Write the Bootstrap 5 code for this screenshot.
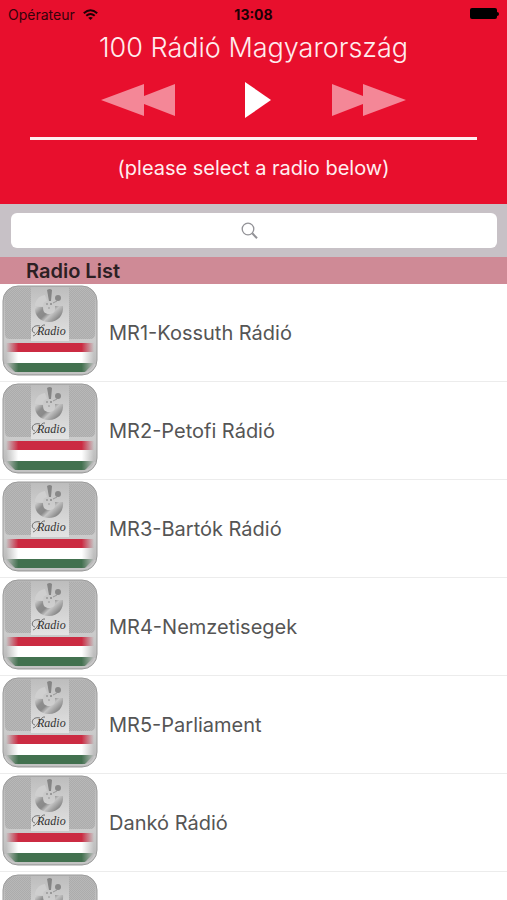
<!DOCTYPE html>
<html lang="hu">
<head>
<meta charset="utf-8">
<meta name="viewport" content="width=device-width, initial-scale=1">
<title>100 Rádió Magyarország</title>
<link href="https://cdn.jsdelivr.net/npm/bootstrap@5.3.0/dist/css/bootstrap.min.css" rel="stylesheet">
<style>
body { font-family: Inter, "Liberation Sans", sans-serif; }
svg { display: block; }
.player { background: #e80f2d; height: 204px; }
.status { height: 28px; font-size: 14px; color: #35020a; }
.status .clock { color: #1c0105; }
.app-title { font-size: 27px; line-height: 40px; font-weight: 300; color: #ffecee; }
.controls { height: 64px; }
.controls .btn:disabled { opacity: 1; border: 0; }
.progress-track { height: 3px; margin: 5px 30px 0; background: #ffeef0; }
.hint { font-size: 20px; line-height: 28px; margin-top: 14px; color: #ffeef0; }
.search { background: #c7c1c6; height: 53px; padding: 9px 10px 0 11px; }
.search .form-control { height: 35px; border: 0; border-radius: 6px; }
.section-head { background: #cf8a96; height: 27px; padding-left: 26px; font-size: 20px; line-height: 28px; font-weight: 600; color: #2c2023; }
.stations { scrollbar-width: none; }
.stations::-webkit-scrollbar { display: none; }
.station { height: 98px; padding: 0 0 0 2px; gap: 11px; font-size: 20px; color: #555; border-color: #ececec; }
</style>
<script src="https://cdn.jsdelivr.net/npm/bootstrap@5.3.0/dist/js/bootstrap.bundle.min.js" defer></script>
</head>
<body class="bg-white">
<svg width="0" height="0" class="position-absolute" aria-hidden="true">
  <defs>
    <linearGradient id="metal" x1="0" y1="0" x2="0" y2="1"><stop offset="0" stop-color="#b5b5b5"/><stop offset=".6" stop-color="#cbcbcb"/><stop offset="1" stop-color="#b4b4b4"/></linearGradient>
    <linearGradient id="shine" x1="0" y1="0" x2="0" y2="1"><stop offset="0" stop-color="#bdbdbd"/><stop offset="1" stop-color="#e3e3e3"/></linearGradient>
    <linearGradient id="ring" x1="0" y1="0" x2="1" y2=".6"><stop offset="0" stop-color="#dcdcdc"/><stop offset=".3" stop-color="#8e8e8e"/><stop offset=".5" stop-color="#8a8a8a"/><stop offset=".65" stop-color="#c4c4c4"/><stop offset="1" stop-color="#7d7d7d"/></linearGradient>
    <linearGradient id="fade" x1="0" y1="0" x2="1" y2="0"><stop offset="0" stop-color="#fff" stop-opacity="0"/><stop offset=".14" stop-color="#fff"/><stop offset=".86" stop-color="#fff"/><stop offset="1" stop-color="#fff" stop-opacity="0"/></linearGradient>
    <pattern id="mesh" width="2" height="2" patternUnits="userSpaceOnUse"><rect width="2" height="2" fill="#b8b8b8"/><path d="M0 0H1V1H0ZM1 1H2V2H1Z" fill="#acacac"/></pattern>
    <mask id="edge"><rect x="4" y="56" width="88" height="34" fill="url(#fade)"/></mask>
    <clipPath id="tile"><rect x="1" y="1" width="94" height="89" rx="15"/></clipPath>
    <symbol id="radio" viewBox="0 0 96 91">
      <g clip-path="url(#tile)">
        <rect width="96" height="91" fill="url(#metal)"/>
        <path d="M3 3H30V54H8Q3 54 3 49ZM66 3H93V49Q93 54 88 54H66Z" fill="url(#mesh)"/>
        <rect x="29" y="2" width="38" height="54" fill="url(#shine)"/>
        <g mask="url(#edge)">
          <path d="M4 58H92V68H4Z" fill="#cb2b42"/>
          <path d="M4 67H92V78H4Z" fill="#fff"/>
          <path d="M4 78H92L83 87H13Z" fill="#42714f"/>
        </g>
      </g>
      <path d="M33 22C32 31 39 37 47 37C56 37 62 30 61 21L53 21C54 27 51 29 47 29C43 29 41 27 41 22Z" fill="url(#ring)"/>
      <path d="M33 21C33 15 37 11 43 10L45 16Q41 17 41 21Z" fill="#cfcfcf"/>
      <path d="M45 5Q48 3 50 5L49 16H47Z" fill="#858585"/>
      <path d="M51 18L55 16" stroke="#999"/>
      <circle cx="56" cy="13" r="3" fill="#888"/>
      <circle cx="45" cy="19" r="1" fill="#999"/><circle cx="49" cy="19" r="1" fill="#888"/><circle cx="47" cy="23" r="1" fill="#aaa"/>
      <path d="M38 41C30 39 28 47 33 48M43 40C38 39 36 50 31 51" fill="none" stroke="#555" stroke-width=".8"/>
      <text x="35" y="50" font-family="'Liberation Serif', serif" font-style="italic" font-size="12" fill="#333">Radio</text>
      <rect x="1" y="1" width="94" height="89" rx="15" fill="none" stroke="#9b9b9b"/>
      <path d="M3 79Q6 88 16 88H80Q90 88 93 79" fill="none" stroke="#c8c8c8" stroke-width="1.5"/>
    </symbol>
  </defs>
</svg>
<div class="d-flex flex-column vh-100 overflow-hidden">
  <header class="player flex-shrink-0">
    <div class="status row g-0 align-items-center px-2">
      <div class="col d-flex align-items-center gap-2">
        <span>Opérateur</span>
        <svg width="15" height="11" viewBox="0 0 15 11" fill="none" stroke="#1c0105" stroke-width="2" role="img" aria-label="Wi-Fi"><path d="M.8 4.2Q7.5-1.8 14.2 4.2M3.3 6.8Q7.5 3.2 11.7 6.8"/><path d="M7.5 11L5.2 8.8Q7.5 7 9.8 8.8Z" fill="#1c0105" stroke="none"/></svg>
      </div>
      <div class="clock col-auto fw-bold">13:08</div>
      <div class="col d-flex justify-content-end">
        <svg width="30" height="12" viewBox="0 0 30 12" role="img" aria-label="Battery full"><rect x="1" width="27" height="11" rx="2"/><path d="M28 4Q30 4 30 6T28 8Z"/></svg>
      </div>
    </div>
    <h1 class="app-title text-center text-nowrap m-0">100 Rádió Magyarország</h1>
    <div class="controls row g-0 align-items-center px-4">
      <div class="col d-flex justify-content-center"><button type="button" class="btn p-0 ms-3" disabled aria-label="Previous"><svg width="75" height="32" viewBox="0 0 75 32"><path d="M0 16L43 0V12L74 0V32L43 20V32Z" fill="#f48797"/></svg></button></div>
      <div class="col-auto"><button type="button" class="btn p-0 border-0 ms-2" aria-label="Play"><svg width="26" height="36" viewBox="0 0 26 36"><path d="M0 0L26 18L0 36Z" fill="#fff"/></svg></button></div>
      <div class="col d-flex justify-content-center"><button type="button" class="btn p-0 me-3" disabled aria-label="Next"><svg width="75" height="32" viewBox="0 0 75 32"><path d="M75 16L32 0V12L1 0V32L32 20V32Z" fill="#f48797"/></svg></button></div>
    </div>
    <div class="progress-track"></div>
    <p class="hint text-center mb-0">(please select a radio below)</p>
  </header>
  <form class="search flex-shrink-0" role="search">
    <div class="position-relative">
      <input type="search" class="form-control" aria-label="Search radios">
      <svg class="position-absolute top-50 start-50 translate-middle pe-none" width="26" height="18" viewBox="0 0 26 18" fill="none" stroke="#929297" aria-hidden="true"><circle cx="7" cy="7" r="5.8" stroke-width="1.3"/><path d="M11.3 11.3L16 16.3" stroke-width="2"/></svg>
    </div>
  </form>
  <h2 class="section-head flex-shrink-0 m-0">Radio List</h2>
  <div class="stations list-group list-group-flush flex-grow-1 overflow-auto">
    <button type="button" class="station list-group-item list-group-item-action d-flex align-items-center flex-shrink-0"><svg class="mb-1" width="96" height="91" aria-hidden="true"><use href="#radio"/></svg><span>MR1-Kossuth Rádió</span></button>
    <button type="button" class="station list-group-item list-group-item-action d-flex align-items-center flex-shrink-0"><svg class="mb-1" width="96" height="91" aria-hidden="true"><use href="#radio"/></svg><span>MR2-Petofi Rádió</span></button>
    <button type="button" class="station list-group-item list-group-item-action d-flex align-items-center flex-shrink-0"><svg class="mb-1" width="96" height="91" aria-hidden="true"><use href="#radio"/></svg><span>MR3-Bartók Rádió</span></button>
    <button type="button" class="station list-group-item list-group-item-action d-flex align-items-center flex-shrink-0"><svg class="mb-1" width="96" height="91" aria-hidden="true"><use href="#radio"/></svg><span>MR4-Nemzetisegek</span></button>
    <button type="button" class="station list-group-item list-group-item-action d-flex align-items-center flex-shrink-0"><svg class="mb-1" width="96" height="91" aria-hidden="true"><use href="#radio"/></svg><span>MR5-Parliament</span></button>
    <button type="button" class="station list-group-item list-group-item-action d-flex align-items-center flex-shrink-0"><svg class="mb-1" width="96" height="91" aria-hidden="true"><use href="#radio"/></svg><span>Dankó Rádió</span></button>
    <button type="button" class="station list-group-item list-group-item-action d-flex align-items-center flex-shrink-0" aria-label="Radio"><svg class="mb-1" width="96" height="91" aria-hidden="true"><use href="#radio"/></svg></button>
  </div>
</div>
</body>
</html>
